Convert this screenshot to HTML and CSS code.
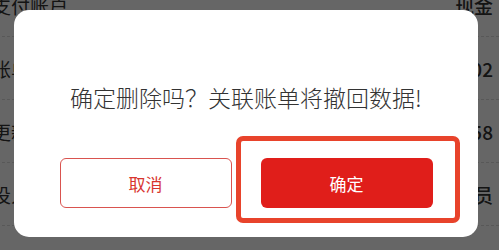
FILE: index.html
```html
<html>

<head>
    <meta charset="utf-8">
    <link rel="stylesheet" href="styles.css">
    <title>删除账单</title>
</head>

<body>
    <div class="list">
        <div class="row first">
            <span class="name">支付账户</span>
            <span class="value">现金</span>
        </div>
        <div class="row">
            <span class="name">账单</span>
            <span class="value">02</span>
        </div>
        <div class="row">
            <span class="name">更新</span>
            <span class="value">58</span>
        </div>
        <div class="row">
            <span class="name">投入</span>
            <span class="value">员</span>
        </div>
    </div>

    <div class="mask">
        <div class="dialog">
            <p class="message">确定删除吗？关联账单将撤回数据!</p>
            <div class="actions">
                <div class="btn cancel">取消</div>
                <div class="confirm-wrap">
                    <div class="btn confirm">确定</div>
                    <div class="mark"></div>
                </div>
            </div>
        </div>
    </div>
</body>

</html>
```

FILE: styles.css
```css
body {
    margin: 0;
    width: 499px;
    height: 250px;
    overflow: hidden;
    background: #fff;
    font-family: "Noto Sans CJK SC", "Noto Sans", sans-serif;
}

.list {
    margin-top: -26px;
}

.row {
    height: 62px;
    display: flex;
    align-items: center;
    justify-content: space-between;
    padding: 0 6px 0 0;
    margin-left: -8px;
    border-bottom: 1px dashed #ddd;
    color: #333;
    font-size: 19px;
}

.row .value {
    font-weight: 500;
}

.mask {
    position: fixed;
    top: 0;
    left: 0;
    right: 0;
    bottom: 0;
    background: rgba(0, 0, 0, 0.6);
    padding: 10px 0 0 14px;
}

.dialog {
    width: 464px;
    height: 227px;
    box-sizing: border-box;
    background: #fff;
    border-radius: 15px;
    padding-top: 72px;
}

.message {
    margin: 0;
    text-align: center;
    font-size: 23px;
    line-height: 30px;
    font-weight: 300;
    color: #333;
}

.actions {
    display: flex;
    justify-content: center;
    gap: 29px;
    margin-top: 46px;
}

.btn {
    width: 172px;
    height: 50px;
    box-sizing: border-box;
    border-radius: 6px;
    display: flex;
    align-items: center;
    justify-content: center;
    font-size: 17px;
}

.cancel {
    border: 1px solid #d9534f;
    color: #d8352f;
}

.confirm {
    background: #e01e1a;
    color: #fff;
}

.confirm-wrap {
    position: relative;
}

.mark {
    position: absolute;
    left: -25px;
    top: -22px;
    right: -27px;
    bottom: -15px;
    border: 5px solid #e8432b;
    border-radius: 7px;
}
```
